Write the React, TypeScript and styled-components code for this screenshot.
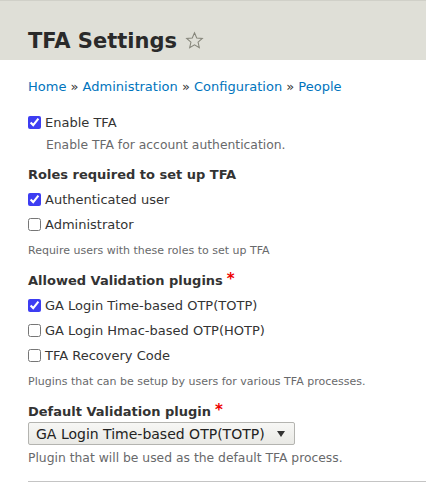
import React from "react";
import styled, { createGlobalStyle } from "styled-components";

const Global = createGlobalStyle`
  html, body { margin: 0; padding: 0; background: #fff; }
  body { font-family: "DejaVu Sans", Verdana, sans-serif; color: #333; font-size: 13px; }
`;

const Header = styled.header`
  background: #dfdfd7;
  border-top: 1px solid #d0d0c8;
  height: 60px;
  padding: 20px 28px 0;
  display: flex;
  align-items: center;
  box-sizing: border-box;
`;

const Title = styled.h1`
  margin: 0;
  font-size: 21px;
  font-weight: bold;
  color: #2a2a2a;
  display: flex;
  align-items: center;
  gap: 8px;
  line-height: 28px;
`;

const StarIcon = () => (
  <svg width="19" height="19" viewBox="0 0 24 24" fill="none" stroke="#85857a" strokeWidth="1.3" strokeLinejoin="miter">
    <path d="M12 2.2l2.8 6.6 7.1.6-5.4 4.7 1.6 7-6.1-3.7-6.1 3.7 1.6-7-5.4-4.7 7.1-.6z" />
  </svg>
);

const Page = styled.main`
  padding: 18px 0 0 28px;
`;

const Breadcrumb = styled.nav`
  font-size: 13px;
  color: #333;
  line-height: 18px;
  margin-bottom: 14px;
  a { color: #0074bd; text-decoration: none; }
`;

const CheckRow = styled.label`
  display: flex;
  align-items: center;
  font-size: 13px;
  color: #333;
  height: 25px;
  input { margin: 0 4px 0 0; width: 13px; height: 13px; accent-color: #3d3df2; }
`;

const Desc = styled.div<{ $indent?: boolean; $small?: boolean }>`
  font-size: ${(p) => (p.$small ? "11px" : "12.35px")};
  color: #68696b;
  padding-left: ${(p) => (p.$indent ? "18px" : "0")};
  margin-top: ${(p) => (p.$indent ? "1px" : "5px")};
  line-height: 18px;
`;

const Group = styled.div`
  margin-top: 11px;
`;

const Legend = styled.div<{ $gap?: number }>`
  font-weight: bold;
  font-size: 13px;
  color: #333;
  line-height: 20px;
  margin-bottom: ${(p) => p.$gap ?? 2}px;
`;

const Req = styled.span`
  color: #e00;
  margin-left: 4px;
  font-size: 15px;
  vertical-align: top;
  line-height: 16px;
`;

const Select = styled.div`
  display: flex;
  align-items: center;
  justify-content: space-between;
  width: 267px;
  height: 23px;
  box-sizing: border-box;
  border: 1px solid #b4b4b0;
  border-radius: 2px;
  background: linear-gradient(#f7f7f5, #e9e9e5);
  padding: 0 7px 0 7px;
  font-size: 14px;
  color: #222;
`;

const Arrow = styled.span`
  width: 0;
  height: 0;
  border-left: 4.5px solid transparent;
  border-right: 4.5px solid transparent;
  border-top: 6px solid #333;
  margin-right: 2px;
`;

const SelectDesc = styled(Desc)`
  margin-top: 4px;
`;

const Rule = styled.hr`
  border: 0;
  border-top: 1px solid #c4c4c4;
  margin: 14px 0 0;
`;

export default function App() {
  return (
    <>
      <Global />
      <Header>
        <Title>
          TFA Settings <StarIcon />
        </Title>
      </Header>
      <Page>
        <Breadcrumb>
          <a href="#">Home</a> » <a href="#">Administration</a> » <a href="#">Configuration</a> » <a href="#">People</a>
        </Breadcrumb>
        <CheckRow>
          <input type="checkbox" defaultChecked />
          Enable TFA
        </CheckRow>
        <Desc $indent>Enable TFA for account authentication.</Desc>
        <Group>
          <Legend>Roles required to set up TFA</Legend>
          <CheckRow>
            <input type="checkbox" defaultChecked />
            Authenticated user
          </CheckRow>
          <CheckRow>
            <input type="checkbox" />
            Administrator
          </CheckRow>
          <Desc $small>Require users with these roles to set up TFA</Desc>
        </Group>
        <Group>
          <Legend $gap={2}>
            Allowed Validation plugins<Req>*</Req>
          </Legend>
          <CheckRow>
            <input type="checkbox" defaultChecked />
            GA Login Time-based OTP(TOTP)
          </CheckRow>
          <CheckRow>
            <input type="checkbox" />
            GA Login Hmac-based OTP(HOTP)
          </CheckRow>
          <CheckRow>
            <input type="checkbox" />
            TFA Recovery Code
          </CheckRow>
          <Desc $small>Plugins that can be setup by users for various TFA processes.</Desc>
        </Group>
        <Group>
          <Legend $gap={0}>
            Default Validation plugin<Req>*</Req>
          </Legend>
          <Select>
            GA Login Time-based OTP(TOTP)
            <Arrow />
          </Select>
          <SelectDesc>Plugin that will be used as the default TFA process.</SelectDesc>
        </Group>
        <Rule />
      </Page>
    </>
  );
}
